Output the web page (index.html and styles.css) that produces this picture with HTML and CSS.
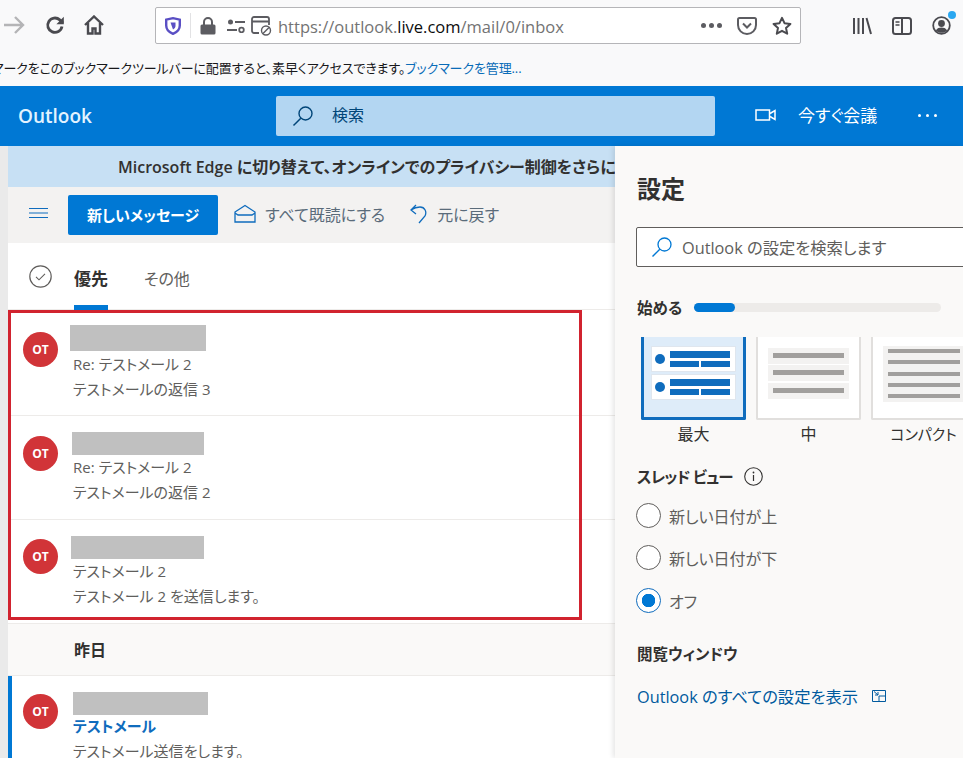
FILE: index.html
```html
<!DOCTYPE html>
<html lang="ja">
<head>
    <meta charset="UTF-8">
    <title>Outlook</title>
    <link rel="stylesheet" href="styles.css">
</head>
<body>
    <div class="browser-bar">
        <div class="nav-buttons">
            <svg class="nav-forward" width="22" height="20" viewBox="0 0 22 20"><path d="M1 10h19M12 2l8 8-8 8" fill="none" stroke="#b4b4b6" stroke-width="2.4"/></svg>
            <svg class="nav-reload" width="20" height="20" viewBox="0 0 20 20"><path d="M17 11.500a7.200 7.200 0 1 1-2.200-6.600L18 8" fill="none" stroke="#4a4a4f" stroke-width="2.800"/><path d="M18.800 1.800v7.400h-7.400z" fill="#4a4a4f"/></svg>
            <svg class="nav-home" width="20" height="20" viewBox="0 0 20 20"><path d="M1 10l9-8.500L19 10M4 8v10.500h4.500v-5h3v5H16V8" fill="none" stroke="#4a4a4f" stroke-width="2.400"/></svg>
        </div>
        <div class="address-bar">
            <svg class="addr-shield" width="16" height="18" viewBox="0 0 16 18"><path d="M1.200 2.700 8 1.200l6.800 1.500v5.800c0 4-3 6.800-6.800 8.300-3.800-1.500-6.800-4.300-6.800-8.300z" fill="none" stroke="#5a4fc4" stroke-width="2.400"/><path d="M5.500 5.500h5V9c0 1.500-1 2.700-2.500 3.500z" fill="#5a4fc4"/></svg>
            <span class="addr-sep"></span>
            <svg class="addr-lock" width="16" height="18" viewBox="0 0 16 18"><path d="M4 8V5a4 4 0 0 1 8 0v3" fill="none" stroke="#5c5c61" stroke-width="2"/><rect x="0.500" y="7.500" width="15" height="10" rx="1.500" fill="#5c5c61"/></svg>
            <svg class="addr-perm" width="18" height="14" viewBox="0 0 18 14"><circle cx="3.500" cy="3" r="2.500" fill="#5c5c61"/><path d="M8 3h10M0 11h10" stroke="#5c5c61" stroke-width="2"/><circle cx="14.500" cy="11" r="2.300" fill="none" stroke="#5c5c61" stroke-width="1.800"/></svg>
            <svg class="addr-block" width="21" height="20" viewBox="0 0 21 20"><path d="M8 17H3a2 2 0 0 1-2-2V3a2 2 0 0 1 2-2h13a2 2 0 0 1 2 2v6M1 5.500h17" fill="none" stroke="#5c5c61" stroke-width="1.800"/><circle cx="15" cy="14.500" r="4.500" fill="none" stroke="#5c5c61" stroke-width="1.400"/><path d="M12 17.500l6-6" stroke="#5c5c61" stroke-width="1.400"/></svg>
            <span class="addr-url">https://outlook.<b>live.com</b>/mail/0/inbox</span>
            <span class="addr-dots"><i></i><i></i><i></i></span>
            <svg class="addr-pocket" width="20" height="18" viewBox="0 0 20 18"><path d="M2.500 1h15A1.500 1.500 0 0 1 19 2.500V8a9 9 0 0 1-18 0V2.500A1.500 1.500 0 0 1 2.500 1z" fill="none" stroke="#5c5c61" stroke-width="2"/><path d="M6 6.500l4 4 4-4" fill="none" stroke="#5c5c61" stroke-width="2"/></svg>
            <svg class="addr-star" width="20" height="19" viewBox="0 0 20 19"><path d="M10 1.800l2.500 5.400 5.900.7-4.400 4 1.200 5.800-5.200-2.900-5.200 2.900L6 11.900l-4.400-4 5.900-.7z" fill="none" stroke="#4a4a4f" stroke-width="2" stroke-linejoin="round"/></svg>
        </div>
        <div class="browser-tools">
            <svg width="20" height="18" viewBox="0 0 20 18"><path d="M2 1v16M6.500 1v16M11 1v16M14.500 1l4.500 16" fill="none" stroke="#4a4a4f" stroke-width="2"/></svg>
            <svg width="20" height="18" viewBox="0 0 20 18"><rect x="1" y="1" width="18" height="16" rx="2.500" fill="none" stroke="#4a4a4f" stroke-width="2"/><path d="M10 1v16" stroke="#4a4a4f" stroke-width="2"/><path d="M3.500 5h4M3.500 8h4" stroke="#4a4a4f" stroke-width="1.300"/></svg>
            <div class="profile">
                <svg width="19" height="19" viewBox="0 0 19 19"><circle cx="9.500" cy="9.500" r="8.300" fill="none" stroke="#4a4a4f" stroke-width="1.800"/><circle cx="9.500" cy="7.500" r="3.400" fill="#4a4a4f"/><path d="M3.800 14.500c1.500-2.400 3.500-3 5.700-3s4.200.6 5.700 3c-1.500 1.500-3.500 2.300-5.700 2.300s-4.200-.8-5.700-2.300z" fill="#4a4a4f"/></svg>
                <span class="profile-dot"></span>
            </div>
        </div>
    </div>

    <div class="bookmark-bar">
        <span class="bookmark-text">ブックマークをこのブックマークツールバーに配置すると、素早くアクセスできます。<a class="bookmark-link">ブックマークを管理...</a></span>
    </div>

    <header class="app-header">
        <div class="app-name">Outlook</div>
        <div class="search-box">
            <svg width="22" height="22" viewBox="0 0 22 22"><circle cx="13.500" cy="8.500" r="6.500" fill="none" stroke="#004578" stroke-width="1.400"/><path d="M8.800 13.200 1.500 20.500" stroke="#004578" stroke-width="1.500"/></svg>
            <span>検索</span>
        </div>
        <div class="header-actions">
            <svg width="21" height="12" viewBox="0 0 21 12"><rect x="1" y="1" width="13.500" height="10" fill="none" stroke="#fff" stroke-width="1.500"/><path d="M15 4.500 20 1.500v9l-5-3" fill="none" stroke="#fff" stroke-width="1.500"/></svg>
            <span class="meet-label">今すぐ会議</span>
            <span class="more-dots"><i></i><i></i><i></i></span>
        </div>
    </header>

    <div class="app-body">
        <main class="mail-pane">
            <div class="edge-banner">Microsoft Edge に切り替えて、オンラインでのプライバシー制御をさらに強化しましょう</div>
            <div class="command-bar">
                <svg class="cmd-menu" width="19" height="10" viewBox="0 0 19 10"><path d="M0 .5h19M0 5h19M0 9.500h19" stroke="#0f6cbd" stroke-width="1"/></svg>
                <button class="new-message">新しいメッセージ</button>
                <div class="cmd-item">
                    <svg width="22" height="19" viewBox="0 0 22 19"><path d="M1 8 11 1.500 21 8v10H1zM1 9l3 2h14l3-2" fill="none" stroke="#0f6cbd" stroke-width="1.300"/></svg>
                    <span>すべて既読にする</span>
                </div>
                <div class="cmd-item cmd-undo">
                    <svg width="17" height="20" viewBox="0 0 17 20"><path d="M6 1 1 6l5 4M1 6c3-2 6-3 9-3 5 0 7 5 5 9l-6 7" fill="none" stroke="#0f6cbd" stroke-width="1.300"/></svg>
                    <span>元に戻す</span>
                </div>
            </div>
            <div class="tabs">
                <svg class="tabs-check" width="23" height="23" viewBox="0 0 23 23"><circle cx="11.500" cy="11.500" r="10.700" fill="none" stroke="#605e5c" stroke-width="1.200"/><path d="M7 11.800l3 3 6-6" fill="none" stroke="#605e5c" stroke-width="1.100"/></svg>
                <div class="tab tab-active">優先</div>
                <div class="tab">その他</div>
            </div>

            <div class="mail-list">
                <div class="mail-item">
                    <div class="avatar">OT</div>
                    <div class="mail-text">
                        <div class="redact redact-a"></div>
                        <div class="mail-line">Re: テストメール 2</div>
                        <div class="mail-line">テストメールの返信 3</div>
                    </div>
                </div>
                <div class="mail-item">
                    <div class="avatar">OT</div>
                    <div class="mail-text">
                        <div class="redact redact-b"></div>
                        <div class="mail-line">Re: テストメール 2</div>
                        <div class="mail-line">テストメールの返信 2</div>
                    </div>
                </div>
                <div class="mail-item">
                    <div class="avatar">OT</div>
                    <div class="mail-text">
                        <div class="redact redact-c"></div>
                        <div class="mail-line">テストメール 2</div>
                        <div class="mail-line">テストメール 2 を送信します。</div>
                    </div>
                </div>
                <div class="day-header">昨日</div>
                <div class="mail-item mail-unread">
                    <div class="avatar">OT</div>
                    <div class="mail-text">
                        <div class="redact redact-d"></div>
                        <div class="mail-line mail-subject">テストメール</div>
                        <div class="mail-line">テストメール送信をします。</div>
                    </div>
                </div>
            </div>
            <div class="highlight-box"></div>
        </main>

        <aside class="settings">
            <h1 class="settings-title">設定</h1>
            <div class="settings-search">
                <svg width="22" height="22" viewBox="0 0 22 22"><circle cx="13.500" cy="8.500" r="6.500" fill="none" stroke="#0078d4" stroke-width="1.300"/><path d="M8.800 13.200 1.500 20.500" stroke="#0078d4" stroke-width="1.400"/></svg>
                <span>Outlook の設定を検索します</span>
            </div>
            <div class="progress-row">
                <span class="section-label">始める</span>
                <div class="progress"><div class="progress-fill"></div></div>
            </div>

            <div class="density-row">
                <div class="density">
                    <div class="density-card density-selected">
                        <div class="mini-msg"><i class="mini-dot"></i><div class="mini-bars"><b></b><span><b></b><b></b></span></div></div>
                        <div class="mini-msg"><i class="mini-dot"></i><div class="mini-bars"><b></b><span><b></b><b></b></span></div></div>
                    </div>
                    <div class="density-label">最大</div>
                </div>
                <div class="density">
                    <div class="density-card density-mid"><p></p><p></p><p></p></div>
                    <div class="density-label">中</div>
                </div>
                <div class="density">
                    <div class="density-card density-compact"><p></p><p></p><p></p><p></p><p></p></div>
                    <div class="density-label density-label-tight">コンパクト</div>
                </div>
            </div>

            <div class="thread-title">
                <span class="section-label thread-label">スレッド ビュー</span>
                <svg width="19" height="19" viewBox="0 0 19 19"><circle cx="9.500" cy="9.500" r="8.800" fill="none" stroke="#323130" stroke-width="1.100"/><path d="M9.500 8v6" stroke="#323130" stroke-width="1.200"/><circle cx="9.500" cy="5.500" r=".9" fill="#323130"/></svg>
            </div>
            <div class="radio-group">
                <div class="radio-row"><span class="radio"></span>新しい日付が上</div>
                <div class="radio-row"><span class="radio"></span>新しい日付が下</div>
                <div class="radio-row"><span class="radio radio-on"></span>オフ</div>
            </div>
            <div class="section-label reading-title">閲覧ウィンドウ</div>
            <a class="all-settings">
                Outlook のすべての設定を表示
                <svg width="14" height="12" viewBox="0 0 14 12"><path d="M.5.5h13v11H.5zM7 6h6.500M7 6v5.500M2 1.500 6 5M3 5h3V2" fill="none" stroke="#005a9e" stroke-width="1"/></svg>
            </a>
        </aside>
    </div>
</body>
</html>
```

FILE: styles.css
```css
* {
    margin: 0;
    padding: 0;
    box-sizing: border-box;
}

html, body {
    width: 963px;
    height: 758px;
    overflow: hidden;
}

body {
    font-family: 'Open Sans', 'Noto Sans CJK JP', sans-serif;
    font-feature-settings: "palt";
    background: #fff;
    color: #323130;
    display: flex;
    flex-direction: column;
}

/* Browser chrome */
.browser-bar {
    height: 52px;
    background: #f9f9fa;
    display: flex;
    align-items: flex-start;
    flex-shrink: 0;
}

.nav-buttons {
    width: 155px;
    padding: 15px 0 0 3px;
    display: flex;
    align-items: center;
}

.nav-reload {
    margin-left: 20px;
}

.nav-home {
    margin-left: 19px;
}

.address-bar {
    width: 646px;
    height: 37px;
    margin-top: 7px;
    background: #fff;
    border: 1px solid #b5b5b8;
    border-radius: 2px;
    display: flex;
    align-items: center;
    padding-left: 9px;
}

.addr-sep {
    width: 1px;
    height: 25px;
    background: #e2e2e4;
    margin: 0 9px;
}

.addr-perm {
    margin-left: 11px;
}

.addr-block {
    margin-left: 6px;
}

.addr-url {
    margin-left: 6px;
    padding-top: 1px;
    font-size: 16.500px;
    color: #737373;
    flex: 1;
}

.addr-url b {
    font-weight: 400;
    color: #0c0c0d;
}

.addr-dots {
    display: flex;
    gap: 3px;
    margin-right: 15px;
}

.addr-dots i {
    width: 5px;
    height: 5px;
    border-radius: 50%;
    background: #5c5c61;
}

.addr-star {
    margin: 0 8px 0 15px;
}

.browser-tools {
    display: flex;
    align-items: center;
    gap: 20px;
    margin: 16px 0 0 51px;
}

.profile {
    position: relative;
    display: flex;
}

.profile-dot {
    position: absolute;
    top: -5px;
    right: -5px;
    width: 8px;
    height: 8px;
    border-radius: 50%;
    background: #2aa7f0;
}

.bookmark-bar {
    height: 34px;
    background: #f9f9fa;
    overflow: hidden;
    white-space: nowrap;
    font-size: 13px;
    line-height: 32px;
    flex-shrink: 0;
}

.bookmark-text {
    display: block;
    margin-left: -41px;
    letter-spacing: -0.11px;
    color: #18181a;
}

.bookmark-link {
    color: #0a6cb8;
}

/* Outlook header */
.app-header {
    height: 60px;
    background: #0078d4;
    color: #fff;
    display: flex;
    align-items: center;
    flex-shrink: 0;
}

.app-name {
    width: 276px;
    padding-left: 18px;
    font-size: 19px;
    font-weight: 600;
    color: #e3f3ff;
}

.search-box {
    width: 439px;
    height: 40px;
    background: #b3d6f2;
    border-radius: 2px;
    display: flex;
    align-items: center;
    padding-left: 16px;
    gap: 18px;
    font-size: 16px;
    color: #004578;
}

.search-box span {
    padding-bottom: 5px;
}

.header-actions {
    display: flex;
    align-items: center;
    margin-left: 40px;
    padding-bottom: 2px;
}

.meet-label {
    font-size: 17px;
    margin-left: 22px;
    padding-bottom: 2px;
}

.more-dots {
    display: flex;
    gap: 5px;
    margin-left: 41px;
}

.more-dots i {
    width: 3px;
    height: 3px;
    border-radius: 50%;
    background: #fff;
}

/* Layout below the header */
.app-body {
    flex: 1;
    display: flex;
    background: #eaeaea;
    padding-left: 8px;
    min-height: 0;
}

.mail-pane {
    position: relative;
    width: 607px;
    background: #fff;
    overflow: hidden;
}

.edge-banner {
    height: 41px;
    line-height: 42px;
    background: #c7e0f4;
    padding-left: 110px;
    white-space: nowrap;
    font-size: 16px;
    font-weight: 600;
}

.command-bar {
    height: 56px;
    background: #f3f2f1;
    display: flex;
    align-items: center;
    padding-left: 21px;
}

.cmd-menu {
    margin-bottom: 4px;
}

.new-message {
    width: 150px;
    height: 40px;
    margin-left: 20px;
    padding-bottom: 2px;
    background: #0078d4;
    color: #fff;
    border: none;
    border-radius: 2px;
    font-family: inherit;
    font-feature-settings: inherit;
    font-size: 15px;
    font-weight: 700;
}

.cmd-item {
    display: flex;
    align-items: center;
    gap: 9px;
    margin-left: 16px;
    font-size: 16px;
    color: #605e5c;
}

.cmd-item span {
    color: #5a6b7a;
    padding-bottom: 2px;
}

.cmd-item svg {
    margin-bottom: 3px;
}

.cmd-undo {
    margin-left: 25px;
    gap: 10px;
}

.tabs {
    height: 67px;
    display: flex;
    align-items: stretch;
    padding-left: 21px;
    border-bottom: 1px solid #edebe9;
}

.tabs-check {
    align-self: center;
    margin-right: 22px;
}

.tab {
    font-size: 16px;
    line-height: 73px;
    color: #605e5c;
    margin-right: 36px;
}

.tab-active {
    font-size: 17px;
    font-weight: 700;
    line-height: 71px;
    color: #323130;
    border-bottom: 5px solid #0078d4;
    margin-bottom: -1px;
}

.mail-item {
    height: 104px;
    display: flex;
    padding: 20px 0 0 15px;
    border-bottom: 1px solid #edebe9;
}

.mail-item:first-child {
    height: 106px;
    padding-top: 22px;
}

.mail-item:nth-child(3) .avatar {
    margin-top: -1px;
}

.avatar {
    width: 35px;
    height: 35px;
    border-radius: 50%;
    background: #d13438;
    color: #fff;
    font-size: 12px;
    font-weight: 700;
    line-height: 35px;
    text-align: center;
    flex-shrink: 0;
}

.mail-text {
    margin-left: 15px;
}

.redact {
    background: #c0c0c0;
    height: 23px;
    margin-top: -4px;
}

.redact-a {
    width: 136px;
    height: 26px;
    margin-left: -3px;
    margin-top: -7px;
    margin-bottom: 1px;
}

.redact-b {
    width: 132px;
    margin-left: -1px;
}

.redact-c {
    width: 133px;
    margin-left: -2px;
}

.redact-d {
    width: 135px;
    margin-top: -2px;
    margin-bottom: -1px;
}

.mail-line {
    font-size: 15px;
    line-height: 25px;
    color: #605e5c;
}

.mail-subject {
    font-weight: 700;
    color: #0f6cbd;
}

.day-header {
    height: 52px;
    background: #faf9f8;
    border-bottom: 1px solid #edebe9;
    padding-left: 66px;
    font-size: 16px;
    font-weight: 700;
    line-height: 52px;
}

.mail-unread {
    border-left: 4px solid #0078d4;
    padding-left: 11px;
    padding-top: 18px;
}

/* Red annotation drawn over the message list */
.highlight-box {
    position: absolute;
    left: 0;
    top: 164px;
    width: 574px;
    height: 310px;
    border: 3px solid #d1232f;
}

/* Settings pane */
.settings {
    width: 348px;
    background: #faf9f8;
    box-shadow: -2px 0 5px rgba(0, 0, 0, 0.1);
    padding: 0 0 0 21px;
    overflow: hidden;
    position: relative;
    white-space: nowrap;
}

.settings-title {
    font-size: 24px;
    font-weight: 700;
    line-height: 30px;
    margin-top: 28px;
    padding-left: 1px;
}

.settings-search {
    width: 340px;
    height: 40px;
    margin-top: 23px;
    background: #fff;
    border: 1px solid #605e5c;
    border-radius: 2px;
    display: flex;
    align-items: center;
    gap: 9px;
    padding-left: 14px;
    font-size: 16.300px;
    color: #605e5c;
}

.progress-row {
    display: flex;
    align-items: center;
    gap: 12px;
    margin-top: 28px;
    height: 24px;
    padding-left: 1px;
}

.section-label {
    font-size: 15.500px;
    font-weight: 600;
    color: #323130;
}

.thread-label {
    letter-spacing: -0.8px;
    padding-left: 1px;
}

.progress {
    width: 247px;
    height: 9px;
    border-radius: 5px;
    background: #edebe9;
}

.progress-fill {
    width: 41px;
    height: 9px;
    border-radius: 5px;
    background: #0078d4;
}

.density-row {
    display: flex;
    gap: 10px;
    margin: 18px 0 0 5px;
}

.density {
    width: 105px;
    flex-shrink: 0;
    text-align: center;
}

.density-card {
    height: 83px;
    background: #fff;
    border: 2px solid #e1dfdd;
    border-top: none;
    border-radius: 0 0 2px 2px;
}

.density-selected {
    background: #deecf9;
    border: 3px solid #0f6cbd;
    border-top: none;
    padding: 9px 7px 0;
}

.mini-msg {
    height: 26px;
    background: #fff;
    border: 1px solid #dfe6ee;
    display: flex;
    align-items: center;
    gap: 5px;
    padding: 0 5px 0 3px;
    margin-bottom: 2px;
}

.mini-dot {
    width: 10px;
    height: 10px;
    border-radius: 50%;
    background: #0f6cbd;
    flex-shrink: 0;
}

.mini-bars {
    flex: 1;
    display: flex;
    flex-direction: column;
    gap: 3px;
}

.mini-bars > b {
    display: block;
    height: 7px;
    background: #0f6cbd;
}

.mini-bars span {
    display: flex;
    gap: 2px;
}

.mini-bars span b {
    flex: 1;
    height: 6px;
    background: #0f6cbd;
}

.density-mid {
    padding: 11px 10px 0;
}

.density-mid p {
    height: 16px;
    margin-bottom: 1.300px;
    background: #f3f2f1;
    padding: 5px 5px 0;
}

.density-mid p::before,
.density-compact p::before {
    content: "";
    display: block;
    height: 5px;
    background: #a19f9d;
}

.density-compact {
    padding: 9px 0 0 10px;
    width: 120px;
}

.density-compact p {
    width: 82px;
    height: 11.300px;
    background: #f3f2f1;
    padding: 3px 5px 0;
}

.density-compact p::before {
    height: 4px;
}

.density-label {
    font-size: 16px;
    line-height: 20px;
    margin-top: 4px;
    color: #323130;
}

.density-label-tight {
    font-size: 15px;
    letter-spacing: -0.1px;
}

.thread-title {
    display: flex;
    align-items: center;
    gap: 11px;
    margin-top: 20px;
    height: 24px;
}

.radio-group {
    display: flex;
    flex-direction: column;
    gap: 17px;
    margin-top: 15px;
}

.radio-row {
    display: flex;
    align-items: center;
    gap: 8px;
    height: 25px;
    font-size: 16px;
    color: #605e5c;
}

.radio-row:last-child {
    margin-top: 1px;
}

.radio {
    width: 25px;
    height: 25px;
    background: #fff;
    border: 1px solid #605e5c;
    border-radius: 50%;
}

.radio-on {
    border-color: #0f6cbd;
    background: radial-gradient(circle, #0078d4 0 6.500px, #fff 7px);
}

.reading-title {
    margin-top: 29px;
    padding-left: 1px;
    line-height: 24px;
}

.all-settings {
    display: flex;
    align-items: center;
    gap: 14px;
    margin-top: 18px;
    padding-left: 1px;
    font-size: 16.300px;
    color: #005a9e;
}
```
